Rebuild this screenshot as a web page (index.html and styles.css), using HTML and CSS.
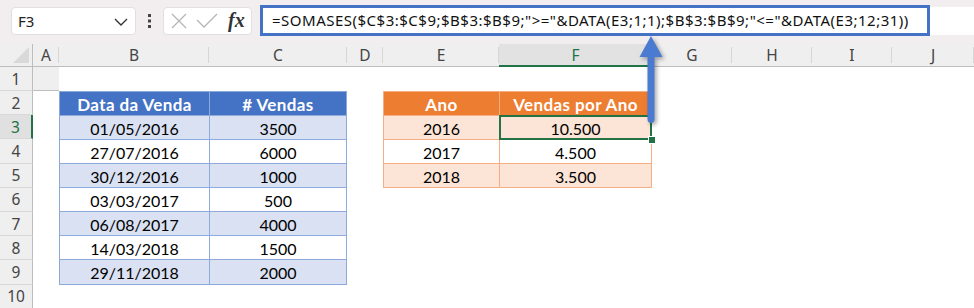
FILE: index.html
```html
<!DOCTYPE html>
<html lang="pt">
<head>
    <meta charset="UTF-8" />
    <title>SOMASES por Ano</title>
    <link rel="stylesheet" href="styles.css">
</head>
<body>
<div class="app">
    <div class="formula-bar">
        <div class="name-box">
            <span>F3</span>
            <svg class="chevron" width="14" height="8" viewBox="0 0 14 8"><polyline points="1,1 7,7 13,1" fill="none" stroke="#333" stroke-width="1.4"/></svg>
        </div>
        <div class="grip">
            <svg width="4" height="14" viewBox="0 0 4 14"><rect x="0" y="0" width="3" height="3" fill="#444"/><rect x="0" y="5.5" width="3" height="3" fill="#444"/><rect x="0" y="11" width="3" height="3" fill="#444"/></svg>
        </div>
        <div class="fx-box">
            <svg width="18" height="18" viewBox="0 0 18 18"><path d="M2 2 L16 16 M16 2 L2 16" stroke="#b5b5b5" stroke-width="1.3" fill="none"/></svg>
            <svg width="22" height="16" viewBox="0 0 22 16"><polyline points="1,7 8,14 21,1" stroke="#b5b5b5" stroke-width="1.3" fill="none"/></svg>
            <span class="fx">fx</span>
        </div>
        <div class="formula-input">
            <div class="formula-highlight">=SOMASES($C$3:$C$9;$B$3:$B$9;"&gt;="&amp;DATA(E3;1;1);$B$3:$B$9;"&lt;="&amp;DATA(E3;12;31))</div>
        </div>
    </div>

    <div class="sheet">
        <div class="corner"></div>
        <div class="col-head">A</div>
        <div class="col-head">B</div>
        <div class="col-head">C</div>
        <div class="col-head">D</div>
        <div class="col-head">E</div>
        <div class="col-head active">F</div>
        <div class="col-head">G</div>
        <div class="col-head">H</div>
        <div class="col-head">I</div>
        <div class="col-head">J</div>
        <div class="col-head last"></div>

        <div class="row-head r1">1</div>
        <div class="row-head r2">2</div>
        <div class="row-head r3 active">3</div>
        <div class="row-head r4">4</div>
        <div class="row-head r5">5</div>
        <div class="row-head r6">6</div>
        <div class="row-head r7">7</div>
        <div class="row-head r8">8</div>
        <div class="row-head r9">9</div>
        <div class="row-head r10">10</div>

        <div class="data-table blue">
            <div class="th">Data da Venda</div><div class="th"># Vendas</div>
            <div class="td band">01/05/2016</div><div class="td band">3500</div>
            <div class="td">27/07/2016</div><div class="td">6000</div>
            <div class="td band">30/12/2016</div><div class="td band">1000</div>
            <div class="td">03/03/2017</div><div class="td">500</div>
            <div class="td band">06/08/2017</div><div class="td band">4000</div>
            <div class="td">14/03/2018</div><div class="td">1500</div>
            <div class="td band">29/11/2018</div><div class="td band">2000</div>
        </div>

        <div class="data-table orange">
            <div class="th">Ano</div><div class="th">Vendas por Ano</div>
            <div class="td band">2016</div><div class="td band selected">10.500<span class="handle"></span></div>
            <div class="td">2017</div><div class="td">4.500</div>
            <div class="td band">2018</div><div class="td band">3.500</div>
        </div>
    </div>

    <svg class="arrow" width="30" height="96" viewBox="636 32 30 96">
        <path d="M651 36 L662.5 57 L654.5 57 L654.5 119 Q654.5 123 651 123 Q647.5 123 647.5 119 L647.5 57 L639.5 57 Z" fill="#4a7bd0"/>
    </svg>
</div>
</body>
</html>
```

FILE: styles.css
```css
body {
    margin: 0;
    background: #ffffff;
    font-family: "Noto Sans", "Open Sans", sans-serif;
}
.app {
    position: relative;
    width: 974px;
    height: 308px;
    overflow: hidden;
}

/* barra de fórmulas */
.formula-bar {
    height: 44px;
    background-color: #f2eef0;
    display: flex;
    align-items: flex-start;
    padding-top: 7px;
    box-sizing: border-box;
}
.name-box {
    margin-left: 11px;
    width: 125px;
    height: 28px;
    background: white;
    border: 1px solid #e2dfe0;
    border-radius: 4px;
    box-sizing: border-box;
    display: flex;
    align-items: center;
    justify-content: space-between;
    padding: 0 7px 0 6px;
    font-size: 15px;
    color: #222;
}
.chevron {
    margin-top: 2px;
}
.grip {
    width: 27px;
    height: 28px;
    display: flex;
    align-items: center;
    justify-content: center;
}
.fx-box {
    width: 89px;
    height: 28px;
    background: white;
    border: 1px solid #e2dfe0;
    border-radius: 4px;
    box-sizing: border-box;
    display: flex;
    align-items: center;
    gap: 8px;
    padding-left: 6px;
}
.fx {
    font-family: "Liberation Serif", serif;
    font-style: italic;
    font-weight: bold;
    font-size: 20px;
    color: #333;
    margin-left: 2px;
    margin-top: -2px;
}
.formula-input {
    margin-left: 8px;
    flex: 1;
    height: 28px;
    background: white;
}
.formula-highlight {
    width: 670px;
    height: 31px;
    margin-top: -2px;
    border: 3px solid #4472c4;
    box-sizing: border-box;
    padding-left: 9px;
    font-size: 15px;
    letter-spacing: 0.5px;
    line-height: 25px;
    color: #111;
    white-space: nowrap;
}

/* folha */
.sheet {
    display: grid;
    grid-template-columns: 33px 26px 150px 138px 36px 116px 153px 80px 80px 80px 1fr;
    grid-template-rows: 23px 24px repeat(9, 24.2px);
    background: white;
}
.corner {
    background: #efefef;
    border-right: 1px solid #bdbdbd;
    border-bottom: 1px solid #bdbdbd;
    position: relative;
}
.corner::after {
    content: "";
    position: absolute;
    right: 3px;
    bottom: 3px;
    border-left: 16px solid transparent;
    border-bottom: 16px solid #d9d9d9;
}
.col-head {
    background: #efefef;
    border-bottom: 1px solid #bdbdbd;
    font-size: 15.5px;
    color: #444;
    text-align: center;
    line-height: 23px;
    position: relative;
}
.col-head::after {
    content: "";
    position: absolute;
    right: 0;
    top: 3px;
    bottom: 3px;
    border-right: 1px solid #d6d6d6;
}
.col-head.last::after {
    display: none;
}
.col-head.active {
    background: #e2e2e2;
    color: #217346;
    border-bottom: 2px solid #217346;
    line-height: 22px;
}
.row-head {
    grid-column: 1;
    background: #efefef;
    border-right: 1px solid #bdbdbd;
    border-bottom: 1px solid #d8d8d8;
    font-size: 15.5px;
    color: #444;
    text-align: center;
    display: flex;
    align-items: center;
    justify-content: center;
}
.row-head.active {
    background: #e0e0e0;
    color: #217346;
    border-right: 2px solid #217346;
}
.r1 { grid-row: 2; }
.r2 { grid-row: 3; }
.r3 { grid-row: 4; }
.r4 { grid-row: 5; }
.r5 { grid-row: 6; }
.r6 { grid-row: 7; }
.r7 { grid-row: 8; }
.r8 { grid-row: 9; }
.r9 { grid-row: 10; }
.r10 { grid-row: 11; }

/* tabelas */
.data-table {
    display: grid;
    padding: 1px;
    gap: 1px;
    font-family: "Lato", "Liberation Sans", sans-serif;
    font-size: 16px;
}
.data-table.blue {
    grid-column: 3 / 5;
    grid-row: 3 / 11;
    grid-template-columns: 149px 1fr;
    grid-template-rows: repeat(8, 1fr);
    background: #8ea9db;
}
.data-table.orange {
    grid-column: 6 / 8;
    grid-row: 3 / 7;
    grid-template-columns: 115px 1fr;
    grid-template-rows: repeat(4, 1fr);
    background: #f4b084;
}
.th,
.td {
    display: flex;
    align-items: center;
    justify-content: center;
    background: white;
    color: #000;
    padding-top: 2px;
}
.th {
    color: white;
    font-weight: bold;
    font-size: 17px;
    letter-spacing: 0.4px;
}
.blue .th {
    background: #4472c4;
}
.orange .th {
    background: #ed7d31;
}
.blue .band {
    background: #d9e1f2;
}
.orange .band {
    background: #fce4d6;
}
.selected {
    position: relative;
    outline: 2px solid #217346;
    outline-offset: -1px;
}
.handle {
    position: absolute;
    right: -5px;
    bottom: -5px;
    width: 6px;
    height: 6px;
    background: #217346;
    border: 1px solid white;
}

.arrow {
    position: absolute;
    left: 636px;
    top: 32px;
    filter: drop-shadow(2px 2px 2px rgba(0, 0, 0, 0.35));
}
```
